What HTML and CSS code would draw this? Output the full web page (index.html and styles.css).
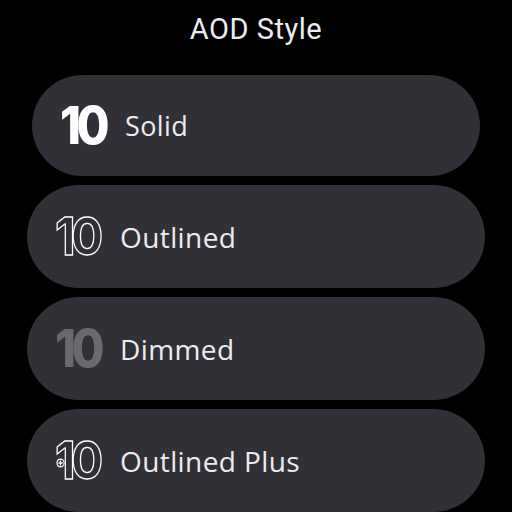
FILE: index.html
```html
<!DOCTYPE html>
<html>
<head>
<meta charset="utf-8">
<link rel="stylesheet" href="styles.css">
</head>
<body>
<div class="screen">
  <div class="title">AOD Style</div>
  <div class="list">
    <div class="chip first">
      <span class="num solid">10</span>
      <span class="label">Solid</span>
    </div>
    <div class="chip">
      <span class="num outlined">10</span>
      <span class="label">Outlined</span>
    </div>
    <div class="chip">
      <span class="num dimmed">10</span>
      <span class="label">Dimmed</span>
    </div>
    <div class="chip">
      <span class="num outlined plus">10<svg class="plus-badge" width="10" height="10" viewBox="0 0 10 10"><circle cx="5" cy="5" r="3.9" fill="#303036" stroke="#fff" stroke-width="1.2"/><path d="M5 2.6v4.8M2.6 5h4.8" stroke="#fff" stroke-width="1.3"/></svg></span>
      <span class="label">Outlined Plus</span>
    </div>
  </div>
</div>
</body>
</html>
```
FILE: styles.css
```css
html, body {
  margin: 0;
  padding: 0;
  background: #000;
}
.screen {
  width: 512px;
  height: 512px;
  overflow: hidden;
  display: flex;
  flex-direction: column;
}
.title {
  height: 75px;
  padding-top: 10px;
  box-sizing: border-box;
  text-align: center;
  color: #ececef;
  font-family: Roboto, "Noto Sans", sans-serif;
  font-size: 29px;
  line-height: 38px;
  letter-spacing: 0.5px;
}
.list {
  display: flex;
  flex-direction: column;
  gap: 9px;
  padding: 0 27px;
}
.chip {
  height: 103px;
  flex-shrink: 0;
  border-radius: 52px;
  background: #303036;
  display: flex;
  align-items: center;
  padding-left: 28px;
  box-sizing: border-box;
}
.chip.first {
  height: 101px;
  margin: 0 5px;
}
.num {
  position: relative;
  width: 65px;
  font-family: Inter, "Open Sans", sans-serif;
  font-weight: 800;
  font-size: 52px;
  letter-spacing: -5px;
  line-height: 1;
  color: #fff;
  transform: scaleX(0.92);
  transform-origin: left center;
}
.num.outlined {
  color: transparent;
  font-weight: 700;
  -webkit-text-stroke: 1.3px #fff;
}
.num.dimmed {
  color: #6a6a6c;
}
.plus-badge {
  position: absolute;
  left: 1px;
  top: 23px;
}
.label {
  font-family: "Open Sans", sans-serif;
  font-weight: 500;
  font-size: 28px;
  color: #ececf0;
  letter-spacing: 0.4px;
}
.first .label {
  font-size: 27px;
}
```
